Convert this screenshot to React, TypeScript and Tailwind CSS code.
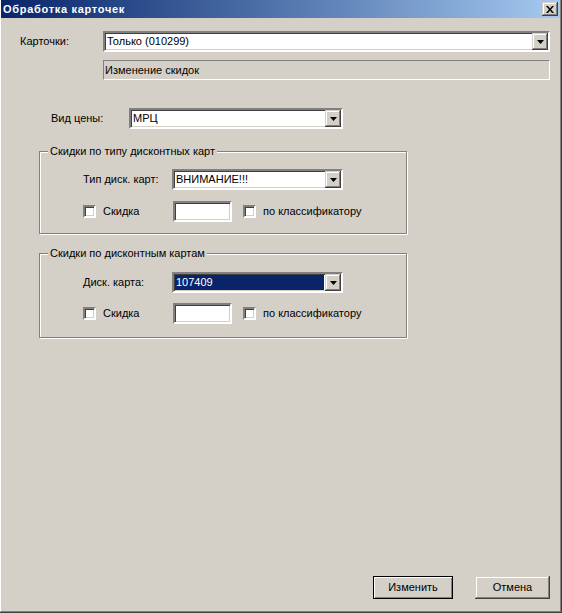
import React from "react";

const font = "font-['Liberation_Sans',Arial,sans-serif] text-[11px] leading-[13px]";

// classic 3D borders
const sunken =
  "border-2 border-t-[#808080] border-l-[#808080] border-b-white border-r-white shadow-[inset_1px_1px_0_#404040,inset_-1px_-1px_0_#d4d0c8]";
const raised =
  "bg-[#d4d0c8] shadow-[inset_-1px_-1px_0_#404040,inset_1px_1px_0_#d4d0c8,inset_-2px_-2px_0_#808080,inset_2px_2px_0_#fff]";

function Combo({
  value,
  width,
  selected = false
}: {
  value: string;
  width: string;
  selected?: boolean;
}) {
  return (
    <div className={`${width} h-[21px] bg-white ${sunken} flex items-stretch`}>
      <div className="flex-1 flex items-stretch p-[1px] min-w-0">
        <div
          className={`flex-1 flex items-center pl-[1px] whitespace-nowrap ${
            selected ? "bg-[#0a246a] text-white" : "text-black"
          }`}
        >
          {value}
        </div>
      </div>
      <div className={`w-[16px] flex items-center justify-center ${raised}`}>
        <svg width="7" height="4" viewBox="0 0 7 4" aria-hidden="true">
          <path d="M0 0h7L3.5 4z" fill="#000" />
        </svg>
      </div>
    </div>
  );
}

function CheckBox() {
  return <div className={`w-[13px] h-[13px] bg-white ${sunken} shrink-0`} />;
}

function DiscountRow() {
  return (
    <div className="flex items-center h-[21px] ml-[43px]">
      <CheckBox />
      <span className="ml-[7px] w-[70px]">Скидка</span>
      <div className={`w-[59px] h-[21px] bg-white ${sunken}`} />
      <div className="ml-[11px]">
        <CheckBox />
      </div>
      <span className="ml-[7px]">по классификатору</span>
    </div>
  );
}

function GroupBox({
  title,
  height,
  children
}: {
  title: string;
  height: string;
  children: React.ReactNode;
}) {
  return (
    <div
      className={`relative ml-[38px] w-[368px] ${height} border border-[#808080] shadow-[inset_1px_1px_0_#fff,1px_1px_0_#fff]`}
    >
      <span className="absolute left-[8px] top-[-7px] px-[2px] bg-[#d4d0c8] whitespace-nowrap">
        {title}
      </span>
      {children}
    </div>
  );
}

export default function App() {
  return (
    <div className={`w-[562px] h-[613px] bg-[#d4d0c8] text-black ${font} border-r border-b border-[#404040]`}>
      <div className="w-full h-full flex flex-col border-r border-b border-[#808080] border-l border-l-white">
        {/* title bar */}
        <div className="h-[18px] shrink-0 flex items-center bg-gradient-to-r from-[#0a246a] to-[#a6caf0] pl-[2px] pr-[2px]">
          <span className="text-white font-bold text-[11px] tracking-[0.7px]">Обработка карточек</span>
          <div
            className={`ml-auto w-[16px] h-[14px] flex items-center justify-center ${raised}`}
          >
            <svg width="8" height="7" viewBox="0 0 8 7" aria-hidden="true">
              <path d="M0 0h2l2 2.5L6 0h2L5 3.5 8 7H6L4 4.5 2 7H0l3-3.5z" fill="#000" />
            </svg>
          </div>
        </div>

        <div className="flex-1 flex flex-col">
          {/* cards */}
          <div className="flex items-center mt-[13px] ml-[19px]">
            <span className="w-[83px]">Карточки:</span>
            <Combo value="Только (010299)" width="w-[447px]" />
          </div>
          <div className="ml-[102px] mt-[8px] w-[447px] h-[20px] border border-t-[#808080] border-l-[#808080] border-b-white border-r-white flex items-center pl-[1px]">
            Изменение скидок
          </div>

          {/* price type */}
          <div className="flex items-center mt-[28px] ml-[50px]">
            <span className="w-[78px]">Вид цены:</span>
            <Combo value="МРЦ" width="w-[214px]" />
          </div>

          <div className="mt-[22px]">
            <GroupBox title="Скидки по типу дисконтных карт" height="h-[83px]">
              <div className="flex items-center mt-[17px] ml-[43px]">
                <span className="w-[89px]">Тип диск. карт:</span>
                <Combo value="ВНИМАНИЕ!!!" width="w-[171px]" />
              </div>
              <div className="mt-[11px]">
                <DiscountRow />
              </div>
            </GroupBox>
          </div>

          <div className="mt-[19px]">
            <GroupBox title="Скидки по дисконтным картам" height="h-[85px]">
              <div className="flex items-center mt-[18px] ml-[43px]">
                <span className="w-[89px]">Диск. карта:</span>
                <Combo value="107409" width="w-[171px]" selected />
              </div>
              <div className="mt-[10px]">
                <DiscountRow />
              </div>
            </GroupBox>
          </div>

          {/* dialog buttons */}
          <div className="mt-auto mb-[12px] mr-[10px] flex justify-end gap-[22px]">
            <button
              type="button"
              className="w-[80px] h-[23px] bg-[#d4d0c8] border border-black shadow-[inset_1px_1px_0_#fff,inset_-1px_-1px_0_#808080] text-[11px]"
            >
              Изменить
            </button>
            <button
              type="button"
              className={`w-[75px] h-[23px] text-[11px] ${raised}`}
            >
              Отмена
            </button>
          </div>
        </div>
      </div>
    </div>
  );
}
